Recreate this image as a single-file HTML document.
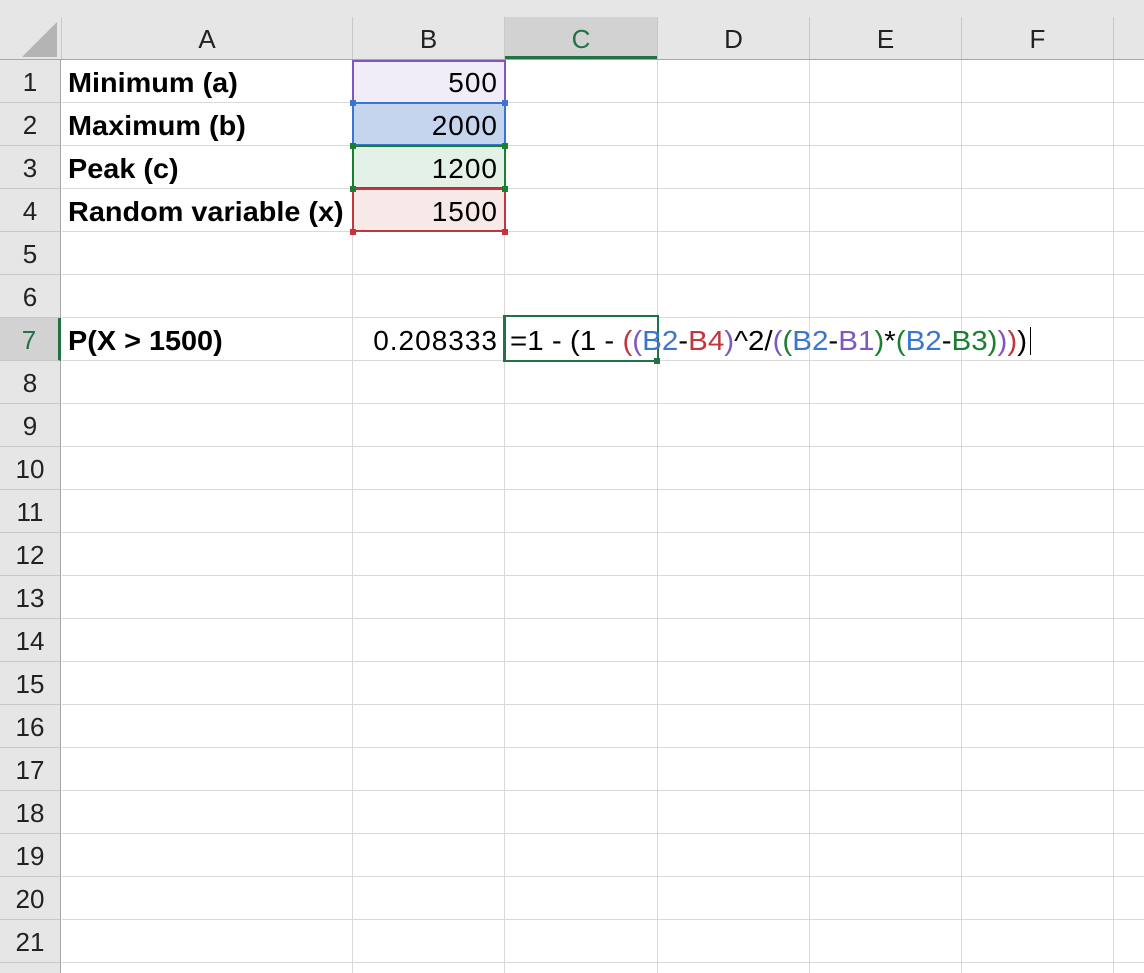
<!DOCTYPE html>
<html><head><meta charset="utf-8"><style>
*{margin:0;padding:0;box-sizing:border-box}
body{width:1144px;height:973px;overflow:hidden;background:#fff;font-family:"Liberation Sans",Arial,sans-serif;position:relative}
.grid{position:absolute;left:62px;top:60px;width:1082px;height:913px;
background-image:repeating-linear-gradient(to bottom,transparent 0,transparent 42px,#d9d9d9 42px,#d9d9d9 43px);}
.vl{position:absolute;top:60px;height:913px;width:1px;background:#d9d9d9}
.hdr{position:absolute;left:0;top:0;width:1144px;height:60px;background:#e6e6e6;border-bottom:1px solid #a6a6a6}
.ch{position:absolute;top:17px;height:42px;font-size:26px;text-align:center;line-height:44px;color:#222}
.hs{position:absolute;top:17px;height:42px;width:1px;background:#c8c8c8}
.rh{position:absolute;left:0;width:61px;background:#e6e6e6;height:913px;top:60px;border-right:1px solid #a6a6a6}
.rn{position:absolute;left:0;width:60px;height:43px;font-size:26px;text-align:center;line-height:45px;color:#222;border-bottom:1px solid #c8c8c8}
.t{position:absolute;font-size:28px;line-height:43px;height:43px;white-space:nowrap;color:#000}
.b{font-weight:bold;left:68px;transform-origin:left;transform:scaleX(1.03)}
.n{right:646px;text-align:right;letter-spacing:1px}
</style></head><body>
<div class="grid"></div>
<div class="vl" style="left:352px"></div><div class="vl" style="left:504px"></div><div class="vl" style="left:657px"></div><div class="vl" style="left:809px"></div><div class="vl" style="left:961px"></div><div class="vl" style="left:1113px"></div>

<div class="hdr">
<div style="position:absolute;left:22px;top:22px;width:0;height:0;border-left:35px solid transparent;border-bottom:35px solid #b4b4b4"></div>
<div class="hs" style="left:61px"></div><div class="hs" style="left:352px"></div><div class="hs" style="left:504px"></div><div class="hs" style="left:657px"></div><div class="hs" style="left:809px"></div><div class="hs" style="left:961px"></div><div class="hs" style="left:1113px"></div>
<div class="ch" style="left:62px;width:290px">A</div>
<div class="ch" style="left:353px;width:151px">B</div>
<div class="ch" style="left:505px;width:152px;background:#d2d2d2;color:#217346;border-bottom:3px solid #217346;height:42px">C</div>
<div class="ch" style="left:658px;width:151px">D</div>
<div class="ch" style="left:810px;width:151px">E</div>
<div class="ch" style="left:962px;width:151px">F</div>
</div>

<div class="rh">
<div class="rn" style="top:0">1</div><div class="rn" style="top:43px">2</div><div class="rn" style="top:86px">3</div><div class="rn" style="top:129px">4</div><div class="rn" style="top:172px">5</div><div class="rn" style="top:215px">6</div>
<div class="rn" style="top:258px;background:#d2d2d2;color:#217346;border-right:3px solid #217346;width:61px">7</div>
<div class="rn" style="top:301px">8</div><div class="rn" style="top:344px">9</div><div class="rn" style="top:387px">10</div><div class="rn" style="top:430px">11</div><div class="rn" style="top:473px">12</div><div class="rn" style="top:516px">13</div><div class="rn" style="top:559px">14</div><div class="rn" style="top:602px">15</div><div class="rn" style="top:645px">16</div><div class="rn" style="top:688px">17</div><div class="rn" style="top:731px">18</div><div class="rn" style="top:774px">19</div><div class="rn" style="top:817px">20</div><div class="rn" style="top:860px">21</div>
</div>

<div style="position:absolute;left:352px;top:60px;width:154px;height:44px;background:#f0edf8;border:2px solid #7e57c2;border-bottom:none"></div>
<div style="position:absolute;left:352px;top:102px;width:154px;height:44px;background:#c5d5ee;border:2px solid #3a75d0"></div>
<div style="position:absolute;left:352px;top:145px;width:154px;height:44px;background:#e4f1e6;border:2px solid #1b7f30"></div>
<div style="position:absolute;left:352px;top:188px;width:154px;height:44px;background:#f8e9e9;border:2px solid #c4343c"></div>
<div style="position:absolute;left:350px;top:100px;width:6px;height:6px;background:#3a75d0"></div><div style="position:absolute;left:502px;top:100px;width:6px;height:6px;background:#3a75d0"></div>
<div style="position:absolute;left:350px;top:143px;width:6px;height:6px;background:#1b7f30"></div><div style="position:absolute;left:502px;top:143px;width:6px;height:6px;background:#1b7f30"></div>
<div style="position:absolute;left:350px;top:186px;width:6px;height:6px;background:#1b7f30"></div><div style="position:absolute;left:502px;top:186px;width:6px;height:6px;background:#1b7f30"></div>
<div style="position:absolute;left:350px;top:229px;width:6px;height:6px;background:#c4343c"></div><div style="position:absolute;left:502px;top:229px;width:6px;height:6px;background:#c4343c"></div>

<div class="t b" style="top:61px">Minimum (a)</div>
<div class="t b" style="top:104px">Maximum (b)</div>
<div class="t b" style="top:147px">Peak (c)</div>
<div class="t b" style="top:190px">Random variable (x)</div>
<div class="t b" style="top:319px">P(X &gt; 1500)</div>
<div class="t n" style="top:61px">500</div>
<div class="t n" style="top:104px">2000</div>
<div class="t n" style="top:147px">1200</div>
<div class="t n" style="top:190px">1500</div>
<div class="t n" style="top:319px">0.208333</div>

<div style="position:absolute;left:503px;top:315px;width:156px;height:47px;border:2px solid #217346;border-left:3px solid #217346;background:#fff"></div>
<div style="position:absolute;left:654px;top:358px;width:6px;height:6px;background:#217346"></div>
<div class="t" style="left:510px;top:319px;transform-origin:left;transform:scaleX(1.055)">=1 - (1 - <span style="color:#c4343c">(</span><span style="color:#7e57c2">(</span><span style="color:#3a75d0">B2</span>-<span style="color:#c4343c">B4</span><span style="color:#7e57c2">)</span>^2/<span style="color:#7e57c2">(</span><span style="color:#1b7f30">(</span><span style="color:#3a75d0">B2</span>-<span style="color:#7e57c2">B1</span><span style="color:#1b7f30">)</span>*<span style="color:#1b7f30">(</span><span style="color:#3a75d0">B2</span>-<span style="color:#1b7f30">B3</span><span style="color:#1b7f30">)</span><span style="color:#7e57c2">)</span><span style="color:#c4343c">)</span>)</div>
<div style="position:absolute;left:1030px;top:327px;width:1px;height:28px;background:#000"></div>
</body></html>
